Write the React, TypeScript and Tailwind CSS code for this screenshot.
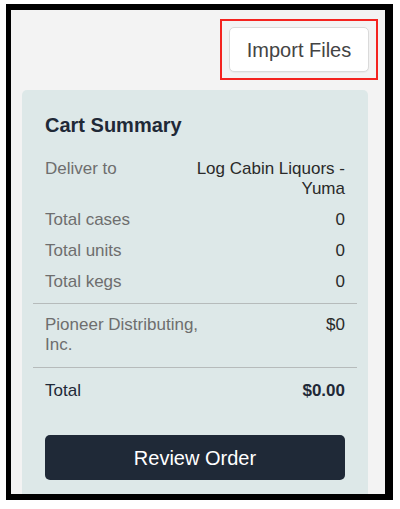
export default function App() {
  const counts = [
    { label: "Total cases", value: "0" },
    { label: "Total units", value: "0" },
    { label: "Total kegs", value: "0" },
  ];

  return (
    <div className="w-[400px] h-[509px] bg-white pt-[4px] pl-[6px] font-['Liberation_Sans',Arial,sans-serif]">
      <div className="w-[387px] h-[496px] border-black border-t-[6px] border-l-[5px] border-r-[8px] border-b-[6px] bg-[#f3f3f3] overflow-hidden">
        {/* header */}
        <div className="flex justify-end pt-[9px] pr-[7px]">
          <div className="border-2 border-[#f4231f] px-[7px] py-[6px]">
            <button className="w-[140px] h-[45px] bg-white border border-[#dadada] rounded-[5px] text-[20px] text-[#444] shadow-[0_1px_1px_rgba(0,0,0,0.04)]">
              Import Files
            </button>
          </div>
        </div>

        {/* Cart summary */}
        <div className="mt-[10px] ml-[11px] w-[346px] bg-[#dde8e8] rounded-[5px] px-[11px] pt-[23px] pb-[24px]">
          <h2 className="px-3 text-[20px] leading-[24px] font-bold text-[#1f2937]">Cart Summary</h2>

          <div className="mt-[22px] px-3 flex flex-col gap-[11px] text-[17px] leading-[20px]">
            <div className="flex justify-between items-start">
              <span className="text-[#6e6e6e]">Deliver to</span>
              <span className="max-w-[60%] text-right text-[#2a2a2a]">Log Cabin Liquors - Yuma</span>
            </div>
            {counts.map((c) => (
              <div key={c.label} className="flex justify-between">
                <span className="text-[#6e6e6e]">{c.label}</span>
                <span className="text-[#2a2a2a]">{c.value}</span>
              </div>
            ))}
          </div>

          <div className="mt-[11px] border-t border-[#b6bbbb]" />

          <div className="mt-[11px] px-3 flex justify-between items-start text-[17px] leading-[20px]">
            <span className="max-w-[60%] text-[#6e6e6e]">Pioneer Distributing, Inc.</span>
            <span className="text-[#2a2a2a]">$0</span>
          </div>

          <div className="mt-[12px] border-t border-[#b6bbbb]" />

          <div className="mt-[13px] px-3 flex justify-between text-[17px] leading-[20px] text-[#1f2937]">
            <span>Total</span>
            <span className="font-bold">$0.00</span>
          </div>

          <div className="mt-[34px] px-3">
            <button className="w-full h-[45px] bg-[#1f2937] rounded-[5px] text-white text-[20px]">
              Review Order
            </button>
          </div>
        </div>
      </div>
    </div>
  );
}
